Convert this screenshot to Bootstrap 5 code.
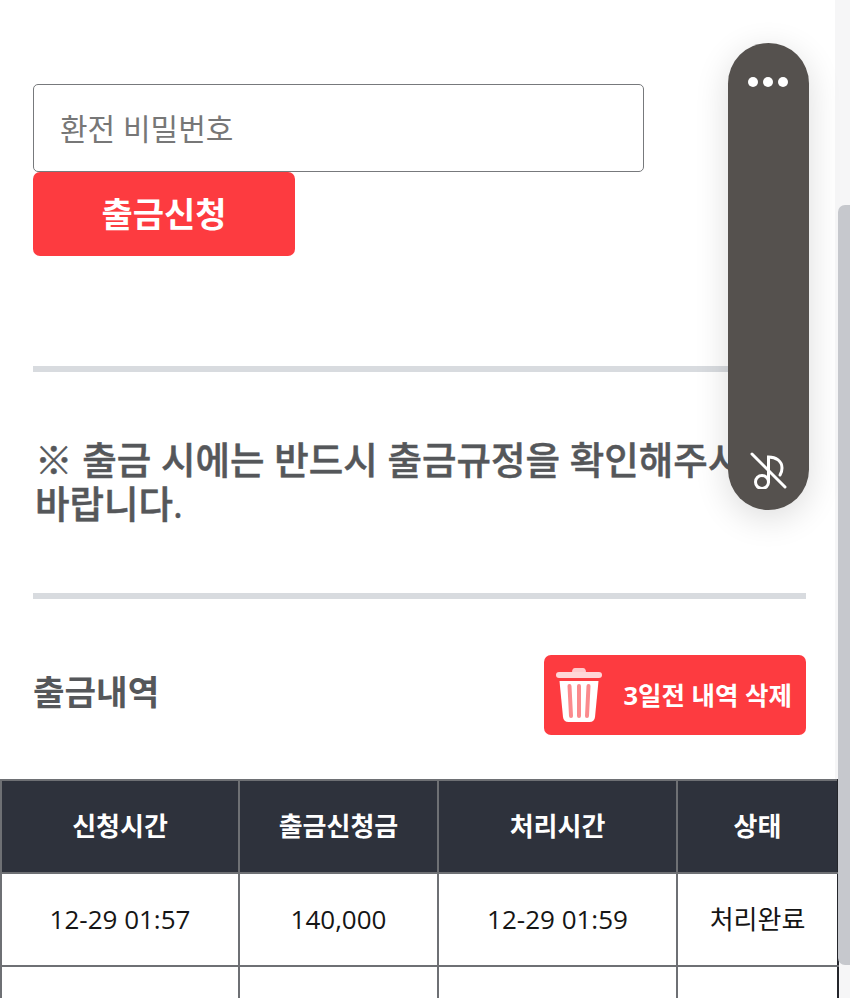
<!DOCTYPE html>
<html lang="ko">
<head>
<meta charset="utf-8">
<title>출금신청</title>
<link href="https://cdn.jsdelivr.net/npm/bootstrap@5.3.0/dist/css/bootstrap.min.css" rel="stylesheet">
<style>
html,body{height:998px;overflow:hidden;background:#fff}
body{font-family:"Open Sans","Noto Sans CJK KR",sans-serif;color:#111;position:relative}
.pg-wrap{padding:84px 44px 0 33px}
.pw-input.form-control{height:88px;width:611px;border:1px solid #77797c;border-radius:5px;padding:0 26px;font-size:30px;color:#333}
.pw-input.form-control::placeholder{color:#777}
.apply-btn.btn{width:262px;height:84px;background:#fd3b40;border:0;border-radius:7px;color:#fff;font-size:34px;font-weight:700;padding:0;display:block}
.sep-line{height:6px;background:#d8dbdf;opacity:1;border:0;margin:0}
.sep-a{margin-top:110px}
.notice-text{margin:66px 0 67px;padding-left:2px;font-size:37.5px;line-height:44px;font-weight:500;-webkit-text-stroke:.5px #55575a;color:#55575a;height:88px}
.hist-head{margin-top:56px;height:80px}
.hist-title{font-size:34.3px;font-weight:700;color:#55575a;margin:0 0 6px}
.del-btn.btn{width:262px;height:80px;background:#fd3b40;border:0;border-radius:7px;color:#fff;font-size:25.5px;font-weight:700;padding:0 14px 0 12px}
.tbl-wrap{margin-top:44px;width:837px;position:relative}
.hist-table{width:837px;table-layout:fixed;border-collapse:collapse;margin:0}
.hist-table th,.hist-table td{border:2px solid #6e7074;text-align:center;vertical-align:middle;height:93px;padding:0}
.hist-table th{background:#2e323c;color:#fff;font-size:26px;font-weight:700}
.hist-table td{background:#fff;color:#151515;font-size:26px}
.hist-table th:last-child,.hist-table td:last-child{border-right-color:#24262b}
.float-pill{position:absolute;left:728px;top:43px;width:81px;height:467px;border-radius:41px;background:#55514e;box-shadow:0 8px 34px rgba(0,0,0,.14)}
.pill-dots{position:absolute;left:20px;top:34px;display:flex;gap:5px}
.pill-dots span{width:10px;height:10px;border-radius:50%;background:#fff}
.pill-icon{position:absolute;left:22px;top:408px}
.sb-track{position:absolute;left:835px;top:0;width:15px;height:998px;background:#f6f6f7}
.sb-thumb{position:absolute;left:838px;top:205px;width:12px;height:760px;border-radius:7px 0 0 7px;background:#c6c8cd;z-index:2}
</style>
</head>
<body>
<div class="sb-track"></div>
<div class="sb-thumb"></div>
<div class="pg-wrap">
  <input class="form-control pw-input" type="password" placeholder="환전 비밀번호">
  <button class="btn apply-btn" type="button">출금신청</button>
  <hr class="sep-line sep-a">
  <p class="notice-text">※ 출금 시에는 반드시 출금규정을 확인해주시기 바랍니다.</p>
  <hr class="sep-line">
  <div class="hist-head d-flex justify-content-between align-items-center">
    <h2 class="hist-title">출금내역</h2>
    <button class="btn del-btn d-flex align-items-center justify-content-between" type="button">
      <svg width="46" height="56" viewBox="0 0 46 56" fill="none" aria-hidden="true">
        <path d="M16 5.5Q16 1 19 1H27Q30 1 30 5.5" fill="#ffc9cb"/>
        <rect x="0" y="5" width="46" height="6" rx="3" fill="#ffd7d8"/>
        <path d="M3.5 14H42.5L39 50Q38.4 55 33.5 55H12.5Q7.6 55 7 50Z" fill="#fff"/>
        <path d="M13.5 19L15 49M23 19V49M32.5 19L31 49" stroke="#fb8a8d" stroke-width="4" stroke-linecap="round"/>
      </svg>
      <span>3일전 내역 삭제</span>
    </button>
  </div>
</div>
<div class="tbl-wrap">
  <table class="table hist-table">
    <colgroup><col style="width:238px"><col style="width:199px"><col style="width:239px"><col style="width:161px"></colgroup>
    <thead><tr><th>신청시간</th><th>출금신청금</th><th>처리시간</th><th>상태</th></tr></thead>
    <tbody>
      <tr><td>12-29 01:57</td><td>140,000</td><td>12-29 01:59</td><td>처리완료</td></tr>
      <tr><td>&nbsp;</td><td>&nbsp;</td><td>&nbsp;</td><td>&nbsp;</td></tr>
    </tbody>
  </table>
</div>
<div class="float-pill">
  <div class="pill-dots"><span></span><span></span><span></span></div>
  <svg class="pill-icon" width="38" height="38" viewBox="0 0 38 38" fill="none" stroke="#fff" stroke-width="3" stroke-linecap="round" aria-hidden="true">
    <path d="M2 3L35 36"/>
    <circle cx="12" cy="31" r="6.5"/>
    <path d="M18.5 31V6C26 6 32 10 32 17C32 20 31.5 22 30 24"/>
  </svg>
</div>
</body>
</html>
